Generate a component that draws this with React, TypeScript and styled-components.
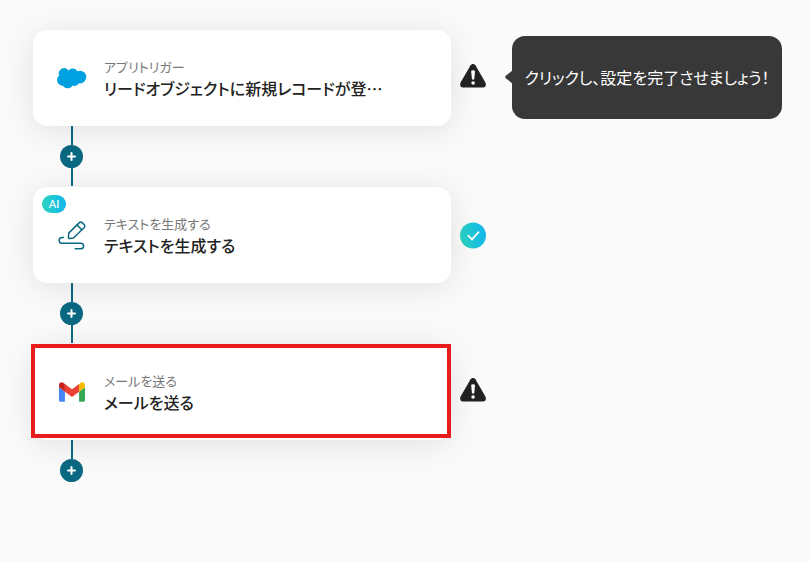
import React from 'react';
import styled, { createGlobalStyle } from 'styled-components';

const GlobalStyle = createGlobalStyle`
  *, *::before, *::after { box-sizing: border-box; }
  body {
    margin: 0;
    background: #fafafa;
    color: #222;
    font-family: "Noto Sans CJK JP", "Noto Sans", sans-serif;
    font-feature-settings: "palt";
  }
  button { font: inherit; font-feature-settings: inherit; color: inherit; }
`;

const TEAL = '#0b6882';
const AI_GRADIENT = 'linear-gradient(90deg, #2bd4bf, #12b5ee)';

const Flow = styled.main`
  padding: 30px 27px 80px 33px;
`;

const StepRow = styled.div`
  display: grid;
  grid-template-columns: minmax(240px, 1fr) 35px 296px;
  align-items: center;
`;

const Card = styled.button`
  position: relative;
  display: flex;
  align-items: center;
  gap: 17px;
  height: 96px;
  padding: 0 24px;
  border: 0;
  border-radius: 14px;
  background: #fff;
  box-shadow: 0 4px 32px rgba(0, 0, 0, 0.1);
  text-align: left;
  cursor: pointer;
`;

const IconSlot = styled.span`
  display: flex;
  flex: none;
  align-items: center;
  justify-content: center;
  width: 30px;
`;

const CardText = styled.span`
  display: flex;
  flex-direction: column;
  min-width: 0;
`;

const Label = styled.span`
  font-size: 13px;
  line-height: 20px;
  color: #777;
`;

const Title = styled.span`
  font-size: 16px;
  line-height: 22px;
  font-weight: 500;
  white-space: nowrap;
`;

const AiBadge = styled.span`
  position: absolute;
  top: 8px;
  left: 9px;
  width: 24px;
  border-radius: 9px;
  background: ${AI_GRADIENT};
  color: #fff;
  font-family: Lato, "Noto Sans", sans-serif;
  font-size: 11px;
  line-height: 18px;
  font-weight: 500;
  text-align: center;
`;

const Highlight = styled.span`
  position: absolute;
  inset: 0 0 2px -2px;
  border: 4px solid #e81c1c;
`;

const Status = styled.span`
  display: flex;
  justify-content: flex-end;
`;

const Tooltip = styled.div`
  position: relative;
  margin: 0 0 2px 26px;
  padding: 29px 12px 30px;
  border-radius: 13px;
  background: #383838;
  color: #fff;
  font-size: 16px;
  line-height: 24px;
  text-align: center;
  white-space: nowrap;
`;

const TooltipArrow = styled.svg`
  position: absolute;
  top: 34px;
  left: -7px;
`;

const Connector = styled.div<{ $open?: boolean }>`
  display: flex;
  flex-direction: column;
  align-items: center;
  width: 23px;
  height: ${(p) => (p.$open ? '42px' : '61px')};
  margin-left: 27px;
  padding-bottom: ${(p) => (p.$open ? '0' : '1px')};
`;

const Line = styled.span`
  flex: 1;
  width: 2px;
  background: ${TEAL};
`;

const AddButton = styled.button`
  display: flex;
  align-items: center;
  justify-content: center;
  width: 23px;
  height: 23px;
  padding: 0;
  border: 0;
  border-radius: 50%;
  background: ${TEAL};
  cursor: pointer;
`;

const SalesforceIcon = () => (
  <svg width="32" height="22" viewBox="0 0 32 22" fill="#00a1e0" aria-hidden="true">
    <circle cx="7.6" cy="6.2" r="5.8" />
    <circle cx="16.8" cy="6" r="5.2" />
    <circle cx="24.4" cy="10" r="6.8" />
    <circle cx="6" cy="13.2" r="6" />
    <circle cx="11.4" cy="16" r="6" />
    <circle cx="18.4" cy="14.2" r="5.4" />
    <path d="M8 4h15v11H8z" />
  </svg>
);

const PenIcon = () => (
  <svg
    width="30"
    height="30"
    viewBox="0 0 30 30"
    fill="none"
    stroke={TEAL}
    strokeWidth="1.5"
    strokeLinecap="round"
    strokeLinejoin="round"
    aria-hidden="true"
  >
    <path d="M11.9 12.9 22.4 2.6q1.4-1.3 2.7 0l2.2 2.2q1.2 1.3 0 2.7L16.4 18l-3.6.4q-1.5.1-1.4-1.4z" />
    <path d="m20 5 4.8 4.8" />
    <path d="M6.4 17.6H5a2.8 2.8 0 0 0 0 5.6h18.8a2.8 2.8 0 0 1 0 5.6h-5.6" />
  </svg>
);

const GmailIcon = () => (
  <svg width="26" height="20" viewBox="52 42 88 66" aria-hidden="true">
    <path fill="#4285f4" d="M58 108h14V74L52 59v43c0 3.32 2.69 6 6 6" />
    <path fill="#34a853" d="M120 108h14c3.32 0 6-2.69 6-6V59l-20 15" />
    <path fill="#fbbc04" d="M120 48v26l20-15v-8c0-7.42-8.47-11.65-14.4-7.2" />
    <path fill="#ea4335" d="M72 74V48l24 18 24-18v26L96 92" />
    <path fill="#c5221f" d="M52 51v8l20 15V48l-5.6-4.2c-5.94-4.45-14.4-.22-14.4 7.2" />
  </svg>
);

const WarningIcon = () => (
  <svg width="26" height="28" viewBox="0 0 26 28" role="img" aria-label="未設定">
    <path
      fill="#222"
      d="M10.6 1.2Q13-1.4 15.4 1.2L25.4 18.6Q27 23 23 23.6H3Q-1 23 .6 18.6z"
    />
    <path fill="#fff" d="M11.2 7.6q0-1.3 1.9-1.3t1.9 1.3l-.7 7.2q-.2.9-1.2.9t-1.2-.9z" />
    <circle cx="13.1" cy="19" r="1.8" fill="#fff" />
  </svg>
);

const CheckIcon = () => (
  <svg width="26" height="27" viewBox="0 0 26 27" role="img" aria-label="設定済み">
    <defs>
      <linearGradient id="done" x1="0" y1="0.6" x2="1" y2="0.4">
        <stop offset="0" stopColor="#2bd4bf" />
        <stop offset="1" stopColor="#12b5ee" />
      </linearGradient>
    </defs>
    <circle cx="13" cy="13.5" r="13" fill="url(#done)" />
    <path d="m7.8 13.2 4.2 4.2 7-7.8" fill="none" stroke="#fff" strokeWidth="1.8" />
  </svg>
);

type Step = {
  label: string;
  title: string;
  icon: React.ReactNode;
  done?: boolean;
  ai?: boolean;
  highlighted?: boolean;
  hint?: string;
};

const steps: Step[] = [
  {
    label: 'アプリトリガー',
    title: 'リードオブジェクトに新規レコードが登…',
    icon: <SalesforceIcon />,
    hint: 'クリックし、設定を完了させましょう！',
  },
  {
    label: 'テキストを生成する',
    title: 'テキストを生成する',
    icon: <PenIcon />,
    done: true,
    ai: true,
  },
  {
    label: 'メールを送る',
    title: 'メールを送る',
    icon: <GmailIcon />,
    highlighted: true,
  },
];

const Add = () => (
  <AddButton type="button" aria-label="ステップを追加">
    <svg width="9" height="9" viewBox="0 0 9 9" aria-hidden="true">
      <path d="M4.5 1v7M1 4.5h7" stroke="#fff" strokeWidth="2" strokeLinecap="round" />
    </svg>
  </AddButton>
);

export default function App() {
  return (
    <>
      <GlobalStyle />
      <Flow>
        {steps.map((step, i) => {
          const last = i === steps.length - 1;
          return (
            <React.Fragment key={step.title}>
              <StepRow>
                <Card type="button">
                  {step.ai && <AiBadge>AI</AiBadge>}
                  <IconSlot>{step.icon}</IconSlot>
                  <CardText>
                    <Label>{step.label}</Label>
                    <Title>{step.title}</Title>
                  </CardText>
                  {step.highlighted && <Highlight />}
                </Card>
                <Status>{step.done ? <CheckIcon /> : <WarningIcon />}</Status>
                {step.hint && (
                  <Tooltip role="tooltip">
                    <TooltipArrow width="8" height="14" viewBox="0 0 8 14" aria-hidden="true">
                      <path fill="#383838" d="M8 0 .8 5.8Q-.4 7 .8 8.2L8 14z" />
                    </TooltipArrow>
                    {step.hint}
                  </Tooltip>
                )}
              </StepRow>
              <Connector $open={last}>
                <Line />
                <Add />
                {!last && <Line />}
              </Connector>
            </React.Fragment>
          );
        })}
      </Flow>
    </>
  );
}
